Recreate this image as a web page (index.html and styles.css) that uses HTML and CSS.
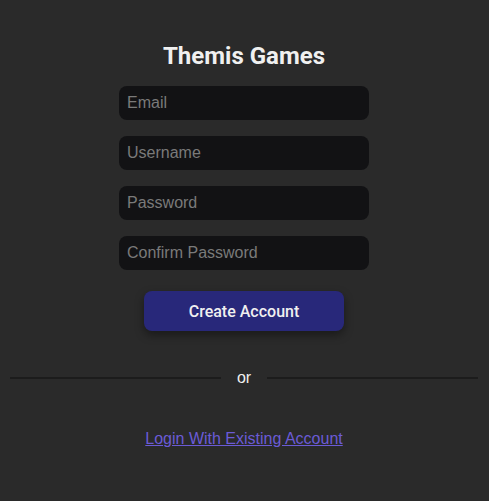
FILE: index.html
```html
<!DOCTYPE html>
<html lang="en">
<head>
    <meta charset="UTF-8">
    <meta name="viewport" content="width=device-width, initial-scale=1.0">
    <title>Themis Games - Sign Up</title>
    <link rel="stylesheet" href="styles.css">
</head>
<body>
    <div class="signup">
        <h1 class="title">Themis Games</h1>
        <form class="signup-form" onsubmit="return false">
            <input type="email" placeholder="Email">
            <input type="text" placeholder="Username">
            <input type="password" placeholder="Password">
            <input type="password" placeholder="Confirm Password">
            <button type="submit">Create Account</button>
        </form>
        <div class="divider">
            <span class="line"></span>
            <span class="or">or</span>
            <span class="line"></span>
        </div>
        <a class="login-link" href="#">Login With Existing Account</a>
    </div>
</body>
</html>
```

FILE: styles.css
```css
body {
    margin: 0;
    background: #2a2a2a;
    font-family: 'Liberation Sans', Arial, sans-serif;
    color: #eee;
}

.signup {
    display: flex;
    flex-direction: column;
    align-items: center;
    padding: 0 11px 0 10px;
}

.title {
    font-family: Roboto, sans-serif;
    font-weight: 700;
    font-size: 24px;
    margin: 42px 0 16px;
    color: #f0f0f0;
}

.signup-form {
    display: flex;
    flex-direction: column;
    align-items: center;
    gap: 16px;
}

.signup-form input {
    width: 250px;
    height: 34px;
    box-sizing: border-box;
    padding: 0 8px;
    border: none;
    border-radius: 8px;
    outline: none;
    background: #121214;
    color: #eee;
    font-family: 'Liberation Sans', Arial, sans-serif;
    font-size: 16px;
}

.signup-form input::placeholder {
    color: #7a7a7a;
}

.signup-form button {
    margin-top: 5px;
    width: 200px;
    height: 40px;
    border: none;
    border-radius: 8px;
    background: #28287a;
    color: #f0f0f0;
    font-family: Roboto, sans-serif;
    font-weight: 500;
    font-size: 16px;
    box-shadow: 0 4px 10px rgba(0, 0, 0, 0.4);
    cursor: pointer;
}

.divider {
    align-self: stretch;
    display: flex;
    align-items: center;
    gap: 16px;
    margin-top: 38px;
}

.line {
    flex: 1;
    height: 2px;
    background: #1c1c1c;
}

.or {
    font-size: 16px;
    color: #f0f0f0;
}

.login-link {
    margin-top: 43px;
    color: #6b5bd6;
    font-size: 16px;
}
```
